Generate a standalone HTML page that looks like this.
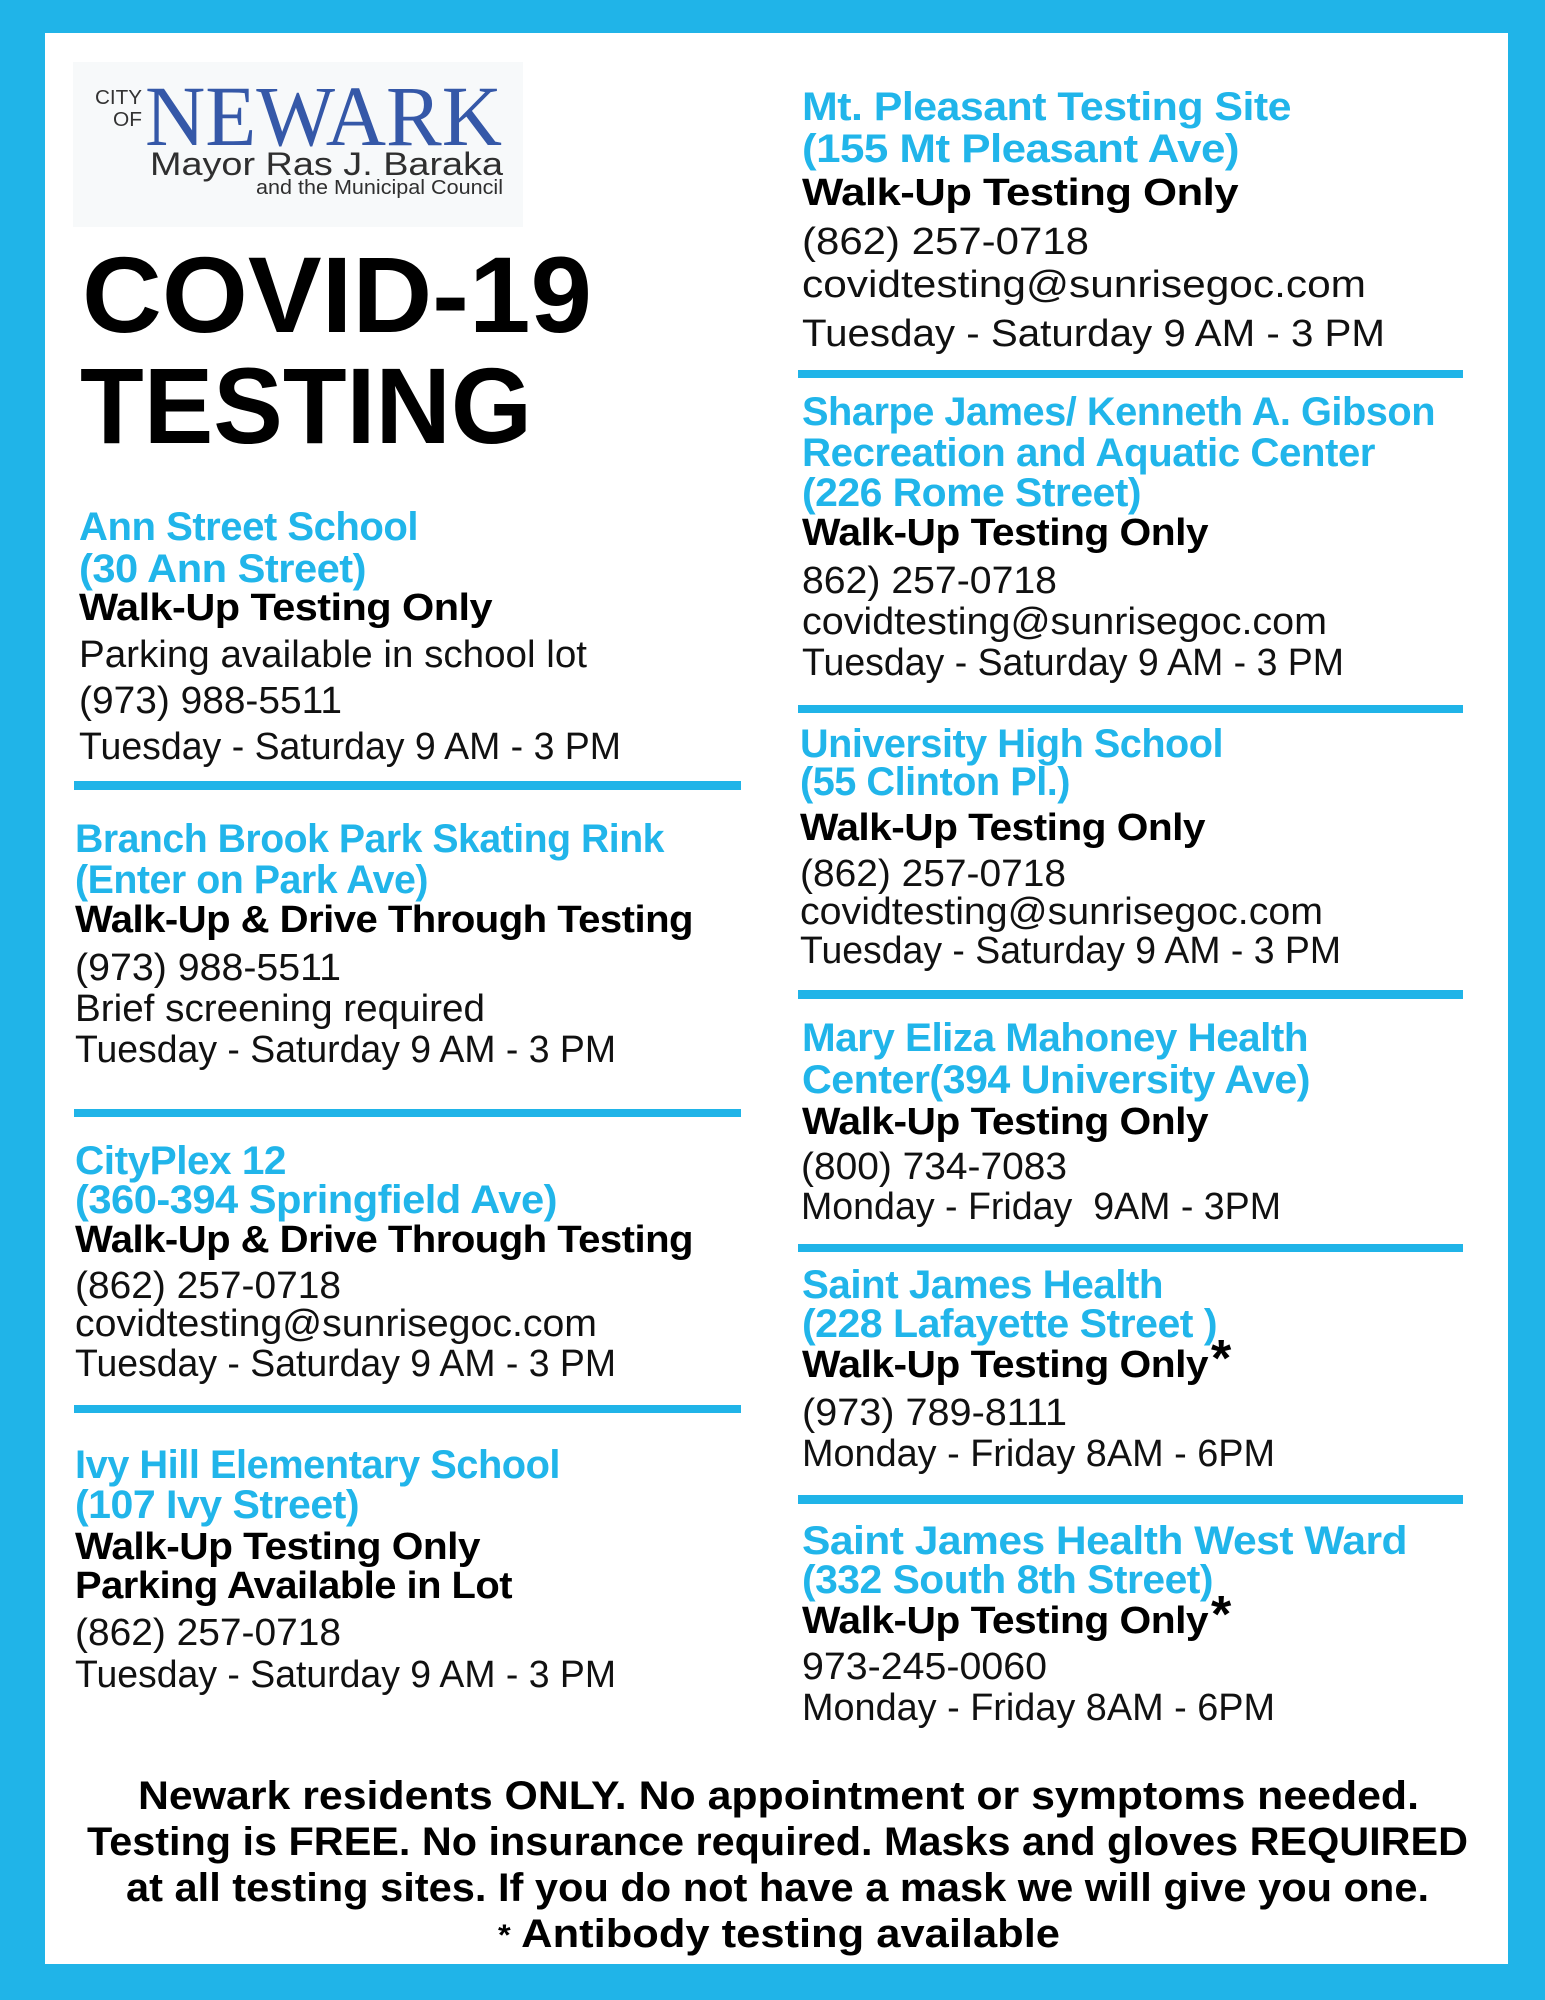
<!DOCTYPE html>
<html><head><meta charset="utf-8">
<style>
html,body{margin:0;padding:0}
body{width:1545px;height:2000px;background:#20b4e8;position:relative;overflow:hidden;font-family:"Liberation Sans",sans-serif}
.page{position:absolute;left:45px;top:33px;width:1463px;height:1931px;background:#fff}
.t{position:absolute;white-space:nowrap;line-height:1;transform-origin:0 0;display:inline-block}
.h{color:#21b5ea;font-weight:bold;font-size:40px;letter-spacing:-0.5px}
.b{color:#000;font-weight:bold;font-size:38px;letter-spacing:-0.5px}
.r{color:#111;font-size:38px;margin-top:-2px}
.f{color:#000;font-weight:bold;font-size:40px;margin-top:-4px}
.ln{position:absolute;background:#20b4e8}
.logo{position:absolute;left:73px;top:62px;width:450px;height:165px;background:#f7f9fa}
</style></head><body>
<div class="page"></div>
<div class="logo"></div>
<div class="t" style="left:95px;top:88px;font-size:20px;color:#333;--w:47">CITY</div>
<div class="t" style="left:113px;top:110px;font-size:20px;color:#333;--w:29">OF</div>
<div class="t" style="left:145px;top:73px;font-family:'Liberation Serif',serif;font-size:86px;color:#3558a8;--w:357">NEWARK</div>
<div class="t" style="left:150px;top:148px;font-size:32px;color:#2f2f2f;--w:353">Mayor Ras J. Baraka</div>
<div class="t" style="left:256px;top:178px;font-size:20px;color:#2f2f2f;--w:247">and the Municipal Council</div>

<div class="t" style="left:82px;top:241px;font-size:108px;font-weight:bold;color:#000;--w:510">COVID-19</div>
<div class="t" style="left:80px;top:352px;font-size:108px;font-weight:bold;color:#000;--w:452">TESTING</div>

<div class="t h" style="left:79px;top:507px;--w:339">Ann Street School</div>
<div class="t h" style="left:79px;top:549px;--w:287">(30 Ann Street)</div>
<div class="t b" style="left:79px;top:589px;--w:413">Walk-Up Testing Only</div>
<div class="t r" style="left:79px;top:638px;--w:508">Parking available in school lot</div>
<div class="t r" style="left:79px;top:684px;--w:263">(973) 988-5511</div>
<div class="t r" style="left:79px;top:730px;--w:542">Tuesday - Saturday 9 AM - 3 PM</div>
<div class="ln" style="left:74px;top:781px;width:667px;height:9px"></div>

<div class="t h" style="left:75px;top:819px;--w:589">Branch Brook Park Skating Rink</div>
<div class="t h" style="left:75px;top:860px;--w:353">(Enter on Park Ave)</div>
<div class="t b" style="left:75px;top:901px;--w:618">Walk-Up &amp; Drive Through Testing</div>
<div class="t r" style="left:75px;top:951px;--w:266">(973) 988-5511</div>
<div class="t r" style="left:75px;top:992px;--w:410">Brief screening required</div>
<div class="t r" style="left:75px;top:1033px;--w:541">Tuesday - Saturday 9 AM - 3 PM</div>
<div class="ln" style="left:74px;top:1109px;width:667px;height:8px"></div>

<div class="t h" style="left:75px;top:1141px;--w:211">CityPlex 12</div>
<div class="t h" style="left:75px;top:1180px;--w:482">(360-394 Springfield Ave)</div>
<div class="t b" style="left:75px;top:1221px;--w:618">Walk-Up &amp; Drive Through Testing</div>
<div class="t r" style="left:75px;top:1269px;--w:266">(862) 257-0718</div>
<div class="t r" style="left:75px;top:1307px;--w:522">covidtesting@sunrisegoc.com</div>
<div class="t r" style="left:75px;top:1347px;--w:541">Tuesday - Saturday 9 AM - 3 PM</div>
<div class="ln" style="left:74px;top:1405px;width:667px;height:8px"></div>

<div class="t h" style="left:75px;top:1445px;--w:485">Ivy Hill Elementary School</div>
<div class="t h" style="left:75px;top:1485px;--w:284">(107 Ivy Street)</div>
<div class="t b" style="left:75px;top:1528px;--w:405">Walk-Up Testing Only</div>
<div class="t b" style="left:75px;top:1567px;--w:437">Parking Available in Lot</div>
<div class="t r" style="left:75px;top:1616px;--w:266">(862) 257-0718</div>
<div class="t r" style="left:75px;top:1658px;--w:541">Tuesday - Saturday 9 AM - 3 PM</div>

<div class="t h" style="left:802px;top:87px;--w:489">Mt. Pleasant Testing Site</div>
<div class="t h" style="left:802px;top:129px;--w:437">(155 Mt Pleasant Ave)</div>
<div class="t b" style="left:802px;top:174px;--w:436">Walk-Up Testing Only</div>
<div class="t r" style="left:802px;top:225px;--w:287">(862) 257-0718</div>
<div class="t r" style="left:802px;top:268px;--w:564">covidtesting@sunrisegoc.com</div>
<div class="t r" style="left:802px;top:317px;--w:583">Tuesday - Saturday 9 AM - 3 PM</div>
<div class="ln" style="left:798px;top:370px;width:665px;height:8px"></div>

<div class="t h" style="left:802px;top:392px;--w:633">Sharpe James/ Kenneth A. Gibson</div>
<div class="t h" style="left:802px;top:433px;--w:573">Recreation and Aquatic Center</div>
<div class="t h" style="left:802px;top:473px;--w:339">(226 Rome Street)</div>
<div class="t b" style="left:802px;top:514px;--w:406">Walk-Up Testing Only</div>
<div class="t r" style="left:802px;top:564px;--w:255">862) 257-0718</div>
<div class="t r" style="left:802px;top:605px;--w:525">covidtesting@sunrisegoc.com</div>
<div class="t r" style="left:802px;top:646px;--w:542">Tuesday - Saturday 9 AM - 3 PM</div>
<div class="ln" style="left:798px;top:705px;width:665px;height:8px"></div>

<div class="t h" style="left:800px;top:724px;--w:423">University High School</div>
<div class="t h" style="left:800px;top:762px;--w:270">(55 Clinton Pl.)</div>
<div class="t b" style="left:800px;top:809px;--w:405">Walk-Up Testing Only</div>
<div class="t r" style="left:800px;top:857px;--w:266">(862) 257-0718</div>
<div class="t r" style="left:800px;top:895px;--w:523">covidtesting@sunrisegoc.com</div>
<div class="t r" style="left:800px;top:934px;--w:541">Tuesday - Saturday 9 AM - 3 PM</div>
<div class="ln" style="left:798px;top:990px;width:665px;height:9px"></div>

<div class="t h" style="left:802px;top:1018px;--w:506">Mary Eliza Mahoney Health</div>
<div class="t h" style="left:802px;top:1060px;--w:508">Center(394 University Ave)</div>
<div class="t b" style="left:802px;top:1103px;--w:406">Walk-Up Testing Only</div>
<div class="t r" style="left:801px;top:1150px;--w:266">(800) 734-7083</div>
<div class="t r" style="left:801px;top:1190px;--w:480">Monday - Friday &nbsp;9AM - 3PM</div>
<div class="ln" style="left:798px;top:1244px;width:665px;height:8px"></div>

<div class="t h" style="left:802px;top:1265px;--w:361">Saint James Health</div>
<div class="t h" style="left:802px;top:1304px;--w:415">(228 Lafayette Street )</div>
<div class="t b" style="left:802px;top:1346px;--w:406">Walk-Up Testing Only</div>
<div class="t" style="left:1211px;top:1333px;font-size:52px;font-weight:bold;color:#000">*</div>
<div class="t r" style="left:802px;top:1396px;--w:265">(973) 789-8111</div>
<div class="t r" style="left:802px;top:1437px;--w:473">Monday - Friday 8AM - 6PM</div>
<div class="ln" style="left:798px;top:1495px;width:665px;height:9px"></div>

<div class="t h" style="left:802px;top:1521px;--w:605">Saint James Health West Ward</div>
<div class="t h" style="left:802px;top:1560px;--w:411">(332 South 8th Street)</div>
<div class="t b" style="left:802px;top:1602px;--w:406">Walk-Up Testing Only</div>
<div class="t" style="left:1211px;top:1589px;font-size:52px;font-weight:bold;color:#000">*</div>
<div class="t r" style="left:802px;top:1650px;--w:245">973-245-0060</div>
<div class="t r" style="left:802px;top:1691px;--w:473">Monday - Friday 8AM - 6PM</div>

<div class="t f" style="left:138px;top:1780px;--w:1281">Newark residents ONLY. No appointment or symptoms needed.</div>
<div class="t f" style="left:87px;top:1826px;--w:1381">Testing is FREE. No insurance required. Masks and gloves REQUIRED</div>
<div class="t f" style="left:126px;top:1872px;--w:1303">at all testing sites. If you do not have a mask we will give you one.</div>
<div class="t f" style="left:498px;top:1918px;--w:562"><span style="font-size:30px;vertical-align:2px">*</span> Antibody testing available</div>

<script>
document.querySelectorAll('.t').forEach(function(el){
  var w=parseFloat(el.style.getPropertyValue('--w'));
  if(!w)return;
  var n=el.getBoundingClientRect().width;
  if(n>0)el.style.transform='scaleX('+(w/n)+')';
});
</script>
</body></html>
